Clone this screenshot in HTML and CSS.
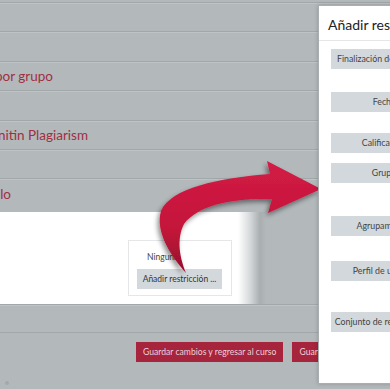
FILE: index.html
```html
<!DOCTYPE html>
<html lang="es">
<head>
  <meta charset="UTF-8" />
  <meta name="viewport" content="width=device-width, initial-scale=1" />
  <title>Restricciones de acceso</title>
  <link rel="stylesheet" href="styles.css">
</head>
<body>
  <div class="sections">
    <div class="row"></div>
    <div class="row"></div>
    <div class="row"><div class="row-title t-grupo"><span>Configuración de entrega por grupo</span></div></div>
    <div class="row"></div>
    <div class="row"><div class="row-title t-turnitin"><span>Turnitin Plagiarism</span></div></div>
    <div class="row"></div>
    <div class="row"><div class="row-title t-modulo"><span>Ajustes comunes del módulo</span></div></div>
  </div>

  <div class="restrict">
    <div class="restrict-box">
      <p class="restrict-none">Ninguna</p>
      <button class="btn-light">Añadir restricción ...</button>
    </div>
  </div>

  <div class="row row-empty"></div>

  <div class="actions">
    <button class="btn-red">Guardar cambios y regresar al curso</button>
    <button class="btn-red">Guardar cambios y mostrar</button>
  </div>
  <span class="dot"></span>

  <!-- arrow drawn over the page -->
  <svg class="arrow" width="390" height="389" viewBox="0 0 390 389">
    <defs>
      <linearGradient id="arrowFill" x1="0" y1="0" x2="0" y2="1">
        <stop offset="0" stop-color="#d21c45" />
        <stop offset="0.6" stop-color="#c4143a" />
        <stop offset="1" stop-color="#96102c" />
      </linearGradient>
      <filter id="arrowShadow" x="-20%" y="-20%" width="140%" height="140%">
        <feDropShadow dx="-2" dy="3" stdDeviation="2.5" flood-color="#000" flood-opacity="0.45" />
      </filter>
    </defs>
    <path d="M186 273 C171 256 155 232 161 211 C171 188 218 178 270 174 L267 161 L321 189 L268 213 L272 199 C232 198 198 205 184 224 C176 240 180 258 186 273 Z" fill="url(#arrowFill)" filter="url(#arrowShadow)" />
  </svg>

  <div class="modal">
    <h2 class="modal-title">Añadir restricción...</h2>
    <div class="modal-body">
      <div class="opt opt-a"><button class="btn-opt">Finalización de actividad</button></div>
      <div class="opt opt-b"><button class="btn-opt">Fecha</button></div>
      <div class="opt opt-c"><button class="btn-opt">Calificación</button></div>
      <div class="opt opt-d"><button class="btn-opt">Grupo</button></div>
      <div class="opt opt-e"><button class="btn-opt">Agrupamiento</button></div>
      <div class="opt opt-f"><button class="btn-opt">Perfil de usuario</button></div>
      <div class="opt"><button class="btn-opt">Conjunto de restricciones</button></div>
    </div>
  </div>
</body>
</html>
```
FILE: styles.css
```css
/* Base */
* {
  box-sizing: border-box;
}
body {
  margin: 0;
  width: 390px;
  height: 389px;
  overflow: hidden;
  position: relative;
  background: #b3b8bb;
  font-family: Lato, 'Open Sans', sans-serif;
  color: #333;
}
button {
  font-family: inherit;
  border: none;
  cursor: pointer;
  white-space: nowrap;
}

/* Collapsed sections */
.sections {
  padding-top: 2px;
}
.row {
  height: 29.4px;
  border-top: 1px solid #a2a7aa;
  box-shadow: inset 0 1px 0 #bfc3c6;
  display: flex;
  align-items: center;
}
.row-title {
  display: flex;
  justify-content: flex-end;
  white-space: nowrap;
  font-size: 13.5px;
  color: #a02f42;
}
.t-grupo {
  width: 53px;
}
.t-turnitin {
  width: 88px;
}
.t-modulo {
  width: 11px;
}

/* Access restrictions */
.restrict {
  margin-top: 4px;
  height: 92px;
  padding: 28px 0 0 128px;
  background: linear-gradient(to right, #fff 0, #fff 238px, #d6d9db 250px, #a9aeb1 260px, #b3b8bb 266px);
}
.restrict-box {
  width: 104px;
  height: 56px;
  border: 1px solid #e4e6e8;
  padding: 9px 0 0 8px;
}
.restrict-none {
  margin: 0 0 2px 10px;
  font-size: 8.5px;
  line-height: 14px;
  color: #444;
}
.btn-light {
  height: 20px;
  width: 85px;
  padding: 0;
  background: #d3d8dc;
  color: #333;
  font-size: 8.5px;
}
.row-empty {
  height: 29px;
  border-bottom: 1px solid #a2a7aa;
}

/* Save buttons */
.actions {
  display: flex;
  gap: 9px;
  padding: 9px 0 0 136px;
}
.btn-red {
  height: 20px;
  padding: 0 7px;
  background: #a6243c;
  color: #ecd0d6;
  font-size: 8.6px;
}
.dot {
  position: absolute;
  left: 5px;
  top: 381px;
  width: 4px;
  height: 4px;
  border-radius: 50%;
  background: #a3a8ab;
}

/* Arrow overlay */
.arrow {
  position: absolute;
  left: 0;
  top: 0;
  pointer-events: none;
}

/* Add restriction dialog */
.modal {
  position: absolute;
  left: 318px;
  top: 5px;
  width: 220px;
  height: 379px;
  background: #fff;
  border: 1px solid #a9aeb1;
  box-shadow: 0 0 4px rgba(0,0,0,0.2);
}
.modal-title {
  margin: 0;
  height: 35px;
  padding: 10px 0 0 9px;
  font-size: 14px;
  font-weight: 400;
  color: #222;
  white-space: nowrap;
  border-bottom: 1px solid #e4e6e8;
}
.modal-body {
  padding: 5px 0 0 12px;
}
.opt {
  height: 42px;
}
.opt-a { height: 43px; }
.opt-b { height: 41px; }
.opt-c { height: 30px; }
.opt-d { height: 53px; }
.opt-e { height: 45px; }
.opt-f { height: 51px; }
.btn-opt {
  width: 106px;
  height: 20px;
  padding: 0;
  background: #d3d8dc;
  color: #444;
  font-size: 8.8px;
}
```
